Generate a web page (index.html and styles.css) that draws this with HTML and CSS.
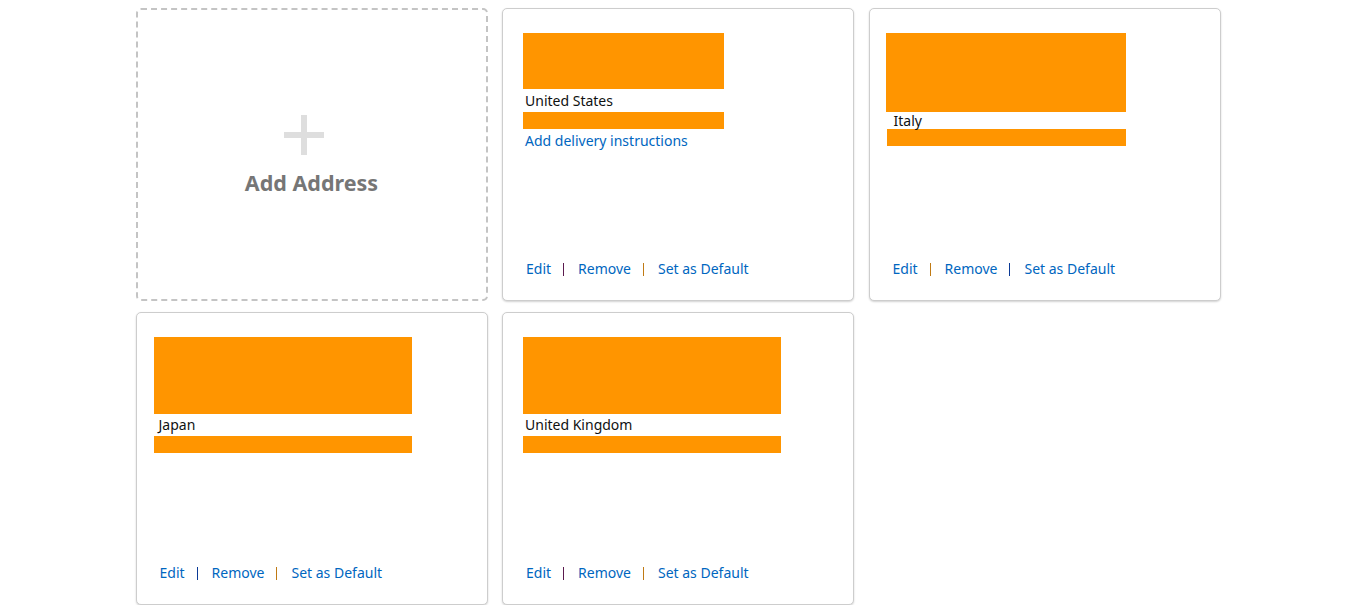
FILE: index.html
```html
<!DOCTYPE html>
<html lang="en">
<head>
  <meta charset="UTF-8" />
  <meta name="viewport" content="width=device-width, initial-scale=1.0"/>
  <title>Your Addresses</title>
  <link rel="stylesheet" href="styles.css">
</head>
<body>
  <div class="address-grid">
    <!-- Add new address tile -->
    <a class="address-tile add-tile" href="#">
      <span class="plus-icon"></span>
      <span class="add-label">Add Address</span>
    </a>

    <div class="address-tile">
      <div class="address-body">
        <div class="redact" style="width: 201px; height: 56px;"></div>
        <div class="address-line">United States</div>
        <div class="redact" style="width: 201px; height: 17px;"></div>
        <a class="delivery-link" href="#">Add delivery instructions</a>
      </div>
      <div class="address-actions">
        <a href="#">Edit</a>
        <span class="sep sep-purple"></span>
        <a href="#">Remove</a>
        <span class="sep sep-orange"></span>
        <a href="#">Set as Default</a>
      </div>
    </div>

    <div class="address-tile">
      <div class="address-body">
        <div class="redact" style="width: 240px; height: 79px; margin-left: -4px;"></div>
        <div class="address-line address-line-short">Italy</div>
        <div class="redact" style="width: 239px; height: 17px; margin-left: -3px;"></div>
      </div>
      <div class="address-actions">
        <a href="#">Edit</a>
        <span class="sep sep-orange"></span>
        <a href="#">Remove</a>
        <span class="sep sep-blue"></span>
        <a href="#">Set as Default</a>
      </div>
    </div>

    <div class="address-tile">
      <div class="address-body">
        <div class="redact" style="width: 258px; height: 77px; margin-left: -3px;"></div>
        <div class="address-line address-line-tall">Japan</div>
        <div class="redact" style="width: 258px; height: 17px; margin-left: -3px;"></div>
      </div>
      <div class="address-actions">
        <a href="#">Edit</a>
        <span class="sep sep-blue"></span>
        <a href="#">Remove</a>
        <span class="sep sep-orange"></span>
        <a href="#">Set as Default</a>
      </div>
    </div>

    <div class="address-tile">
      <div class="address-body">
        <div class="redact" style="width: 258px; height: 77px;"></div>
        <div class="address-line address-line-tall">United Kingdom</div>
        <div class="redact" style="width: 258px; height: 17px;"></div>
      </div>
      <div class="address-actions">
        <a href="#">Edit</a>
        <span class="sep sep-purple"></span>
        <a href="#">Remove</a>
        <span class="sep sep-orange"></span>
        <a href="#">Set as Default</a>
      </div>
    </div>
  </div>
</body>
</html>
```

FILE: styles.css
```css
body {
  margin: 0;
  font-family: "Noto Sans", Arial, sans-serif;
  font-size: 14px;
  color: #0f1111;
  background: #fff;
}
a {
  color: #0066c0;
  text-decoration: none;
}

.address-grid {
  display: grid;
  grid-template-columns: 352px 352px 352px;
  grid-auto-rows: 293px;
  column-gap: 14.5px;
  row-gap: 11px;
  padding: 8px 0 0 135.5px;
}

.address-tile {
  box-sizing: border-box;
  display: flex;
  flex-direction: column;
  padding: 24px 20px 22px;
  border: 1px solid #cdcdcd;
  border-radius: 5px;
  box-shadow: 0 1px 2px rgba(0, 0, 0, 0.18);
  background: #fff;
}

/* add address tile */
.add-tile {
  align-items: center;
  justify-content: center;
  padding: 4px 0 0;
  border: 2px dashed #c4c4c4;
  box-shadow: none;
}
.plus-icon {
  position: relative;
  width: 40px;
  height: 40px;
  margin-right: 16px;
}
.plus-icon::before,
.plus-icon::after {
  content: "";
  position: absolute;
  background: #dedede;
}
.plus-icon::before {
  left: 0;
  top: 17px;
  width: 40px;
  height: 6px;
}
.plus-icon::after {
  left: 17px;
  top: 0;
  width: 6px;
  height: 40px;
}
.add-label {
  margin-top: 13px;
  font-size: 21.5px;
  font-weight: bold;
  color: #767676;
  line-height: 30px;
}

/* address content */
.address-body {
  flex: 1;
}
.redact {
  background: #ff9500;
}
.address-line {
  padding: 2px 0 2px 2px;
  line-height: 19px;
}
.address-line-short {
  padding: 0 0 0 4px;
  line-height: 17px;
}
.address-line-tall {
  padding: 1px 0 2px 2px;
}
.delivery-link {
  display: block;
  margin-top: 2px;
  padding-left: 2px;
  line-height: 19px;
}

.address-actions {
  display: flex;
  align-items: center;
  padding-left: 3px;
  line-height: 19px;
}
.sep {
  display: inline-block;
  width: 1px;
  height: 13px;
  margin: 1px 14px 0 12px;
}
.sep-purple {
  background: #5b1a4e;
}
.sep-orange {
  background: #c07a14;
}
.sep-blue {
  background: #0b3a96;
}
```
